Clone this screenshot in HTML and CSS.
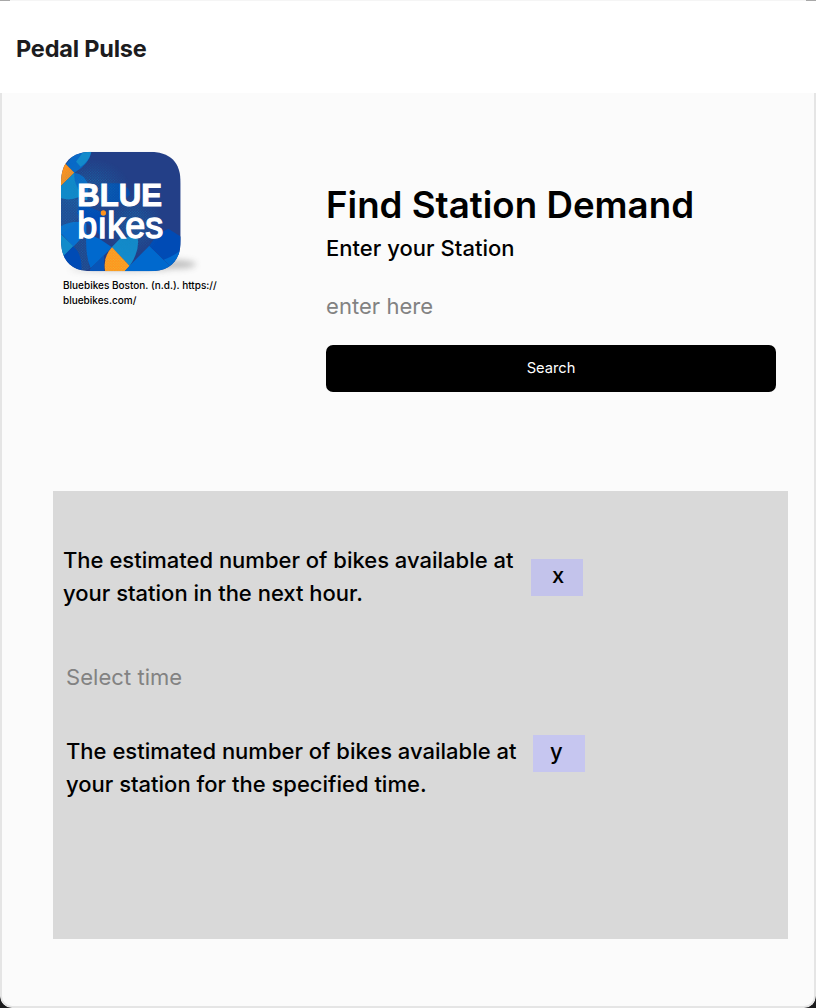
FILE: index.html
```html
<!DOCTYPE html>
<html lang="en">
<head>
<meta charset="utf-8">
<title>Pedal Pulse</title>
<link rel="stylesheet" href="styles.css">
</head>
<body>
<div class="app">
  <header class="header"><span class="brand">Pedal Pulse</span></header>
  <main class="main">
    <section class="finder">
      <figure class="source">
        <svg class="logo" viewBox="0 0 480 420" role="img" aria-label="Blue Bikes">
          <defs>
            <clipPath id="tile"><path d="M130 35H295C362 35 392 66 392 130V299C392 363 362 394 297 394H128C63 394 33 363 33 299V130C33 66 63 35 130 35Z"/></clipPath>
            <pattern id="dots" width="8" height="8" patternUnits="userSpaceOnUse"><circle cx="2" cy="2" r="1.9" fill="#147fba"/><circle cx="6" cy="6" r="1.9" fill="#147fba"/></pattern>
            <pattern id="sun" width="8" height="8" patternUnits="userSpaceOnUse"><circle cx="2" cy="2" r="1.5" fill="#e4c23c"/><circle cx="6" cy="6" r="1.5" fill="#e4c23c"/></pattern>
            <radialGradient id="fade"><stop offset=".3" stop-color="#fff" stop-opacity=".8"/><stop offset="1" stop-color="#fff" stop-opacity="0"/></radialGradient>
            <mask id="haze"><ellipse cx="125" cy="145" rx="115" ry="90" fill="url(#fade)"/><ellipse cx="250" cy="250" rx="90" ry="100" fill="url(#fade)"/></mask>
            <filter id="soft" x="-40%" y="-120%" width="180%" height="340%"><feGaussianBlur stdDeviation="9"/></filter>
          </defs>
          <ellipse cx="372" cy="373" rx="66" ry="13" fill="#777" opacity=".45" filter="url(#soft)"/>
          <ellipse cx="210" cy="388" rx="150" ry="8" fill="#777" opacity=".3" filter="url(#soft)"/>
          <g clip-path="url(#tile)">
            <rect x="33" y="35" width="360" height="360" fill="#233f87"/>
            <path d="M48 73L78 35H124Q118 72 73 98Z" fill="#0869c7"/>
            <path d="M78 65L100 35H124Q118 64 92 80Z" fill="#138bcb"/>
            <path d="M30 55L73 98L30 141Z" fill="#ff931c"/>
            <path d="M73 98L112 137V180H33V138Z" fill="#108bcb"/>
            <path d="M73 98Q104 101 117 139L108 170Q70 142 73 98Z" fill="#0869c7"/>
            <path d="M33 175Q60 183 88 171V230L33 285Z" fill="#234790"/>
            <path d="M88 190L165 220V300L80 220Z" fill="#004bb5"/>
            <path d="M150 130H205Q240 140 240 163Q225 186 170 198Z" fill="#064ead"/>
            <path d="M33 259Q66 239 109 248L109 280L70 320L33 280Z" fill="#0871d0"/>
            <path d="M33 282L70 319L33 356Z" fill="#128bcb"/>
            <path d="M33 356L70 319Q99 344 94 394H33Z" fill="#004bb5"/>
            <path d="M109 280L148 296L186 322L147 361L122 385Q105 347 109 280Z" fill="#0069ce"/>
            <path d="M147 361L162 346L162 394H120V387Z" fill="#0755b8"/>
            <path d="M185 322L214 292H263Q270 333 239 378Z" fill="#138bcb"/>
            <path d="M186 322L239 378L222 396H166Q157 352 186 322Z" fill="#ff931c"/>
            <path d="M186 322L239 378L222 396H166Q157 352 186 322Z" fill="url(#sun)"/>
            <path d="M238 378L298 317L378 396H222Z" fill="#0069ce"/>
            <path d="M298 317Q320 280 355 266L393 290V345L341 359Z" fill="#004bb5"/>
            <path d="M341 359Q369 350 393 330V394H376Z" fill="#0069ce"/>
            <rect x="33" y="35" width="360" height="360" fill="url(#dots)" mask="url(#haze)"/>
            <path d="M33 178H88V240L33 285Z" fill="url(#dots)" opacity=".6"/>
            <path d="M70 319L109 280Q106 335 120 388L94 394Q98 344 70 319Z" fill="url(#dots)" opacity=".6"/>
            <g class="logo-text">
              <text class="logo-bold" x="82" y="198" textLength="254" lengthAdjust="spacingAndGlyphs">BLUE</text>
              <text class="logo-light" x="82" y="294" textLength="258" lengthAdjust="spacingAndGlyphs">bıkes</text>
            </g>
            <circle cx="160" cy="219" r="8" fill="#ff931c"/>
          </g>
        </svg>
        <figcaption class="caption">Bluebikes Boston. (n.d.). https://<br>bluebikes.com/</figcaption>
      </figure>
      <div class="search">
        <h1 class="title">Find Station Demand</h1>
        <div class="label">Enter your Station</div>
        <div class="placeholder">enter here</div>
        <button class="button">Search</button>
      </div>
    </section>
    <section class="results">
      <div class="result">
        <p class="text">The estimated number of bikes available at<br>your station in the next hour.</p>
        <div class="value value-x">x</div>
      </div>
      <div class="time">Select time</div>
      <div class="result result-time">
        <p class="text">The estimated number of bikes available at<br>your station for the specified time.</p>
        <div class="value value-y">y</div>
      </div>
    </section>
  </main>
</div>
</body>
</html>
```
FILE: styles.css
```css
* { box-sizing: border-box; }
body {
  margin: 0;
  background: #1c1c1e;
  font-family: Inter, sans-serif;
  color: #000;
}
.app {
  height: 1008px;
  display: flex;
  flex-direction: column;
  border-radius: 0 0 12px 12px;
  overflow: hidden;
}
.header {
  height: 93px;
  flex: none;
  padding: 4px 16px 0;
  display: flex;
  align-items: center;
  background:
    linear-gradient(90deg, #a8a8a8 10px, #f5f5f5 10px calc(100% - 10px), #a8a8a8 calc(100% - 10px)) 0 0 / 100% 1px no-repeat,
    #fff;
}
.brand {
  font-size: 23.5px;
  font-weight: 700;
  letter-spacing: -0.2px;
  color: #1c1c1e;
}
.main {
  flex: 1;
  background: #fbfbfb;
  border: 2px solid #e5e5e5;
  border-top: 0;
  border-radius: 0 0 12px 12px;
}
.finder {
  height: 398px;
  padding: 47px 38px 0 48px;
  display: flex;
}
.source { width: 276px; margin: 0; }
.logo { display: block; width: 160px; height: 140px; }
.logo-text { font-family: "Liberation Sans", Arial, sans-serif; fill: #fff; stroke: #fff; }
.logo-bold { font-size: 94px; font-weight: 700; stroke-width: 3px; }
.logo-light { font-size: 108px; stroke-width: 4px; }
.caption {
  margin: -2px 0 0 13px;
  font-size: 10px;
  line-height: 15px;
  font-weight: 500;
  white-space: nowrap;
}
.search { width: 450px; padding-top: 37px; }
.title {
  margin: 0;
  font-size: 36.7px;
  line-height: 56px;
  font-weight: 600;
  white-space: nowrap;
}
.label { margin-top: -1px; font-size: 22px; line-height: 33px; font-weight: 500; letter-spacing: 0.03px; }
.placeholder { margin-top: 25px; font-size: 22px; line-height: 33px; color: #828282; letter-spacing: 0.05px; }
.button {
  display: block;
  width: 450px;
  height: 47px;
  margin-top: 22px;
  padding: 0 0 1px;
  border: 0;
  border-radius: 7px;
  background: #000;
  color: #fff;
  font: 400 14.7px Inter, sans-serif;
}
.results {
  width: 735px;
  height: 448px;
  margin-left: 51px;
  padding: 53px 0 0 10px;
  background: #d9d9d9;
}
.result { display: flex; }
.text {
  width: 468px;
  margin: 0;
  font-size: 22px;
  line-height: 33px;
  font-weight: 500;
  white-space: nowrap;
}
.value {
  width: 52px;
  height: 37px;
  font-size: 22px;
  line-height: 33px;
  font-weight: 500;
  background: #c3c3eb;
}
.value-x { margin-top: 15px; padding-left: 21px; }
.value-y { padding-left: 17px; background: #c6c6f0; }
.time { margin: 51px 0 41px 3px; font-size: 22px; line-height: 33px; color: #828282; letter-spacing: 0.05px; }
.result-time { margin-left: 3px; }
.result-time .text { width: 467px; }
```
